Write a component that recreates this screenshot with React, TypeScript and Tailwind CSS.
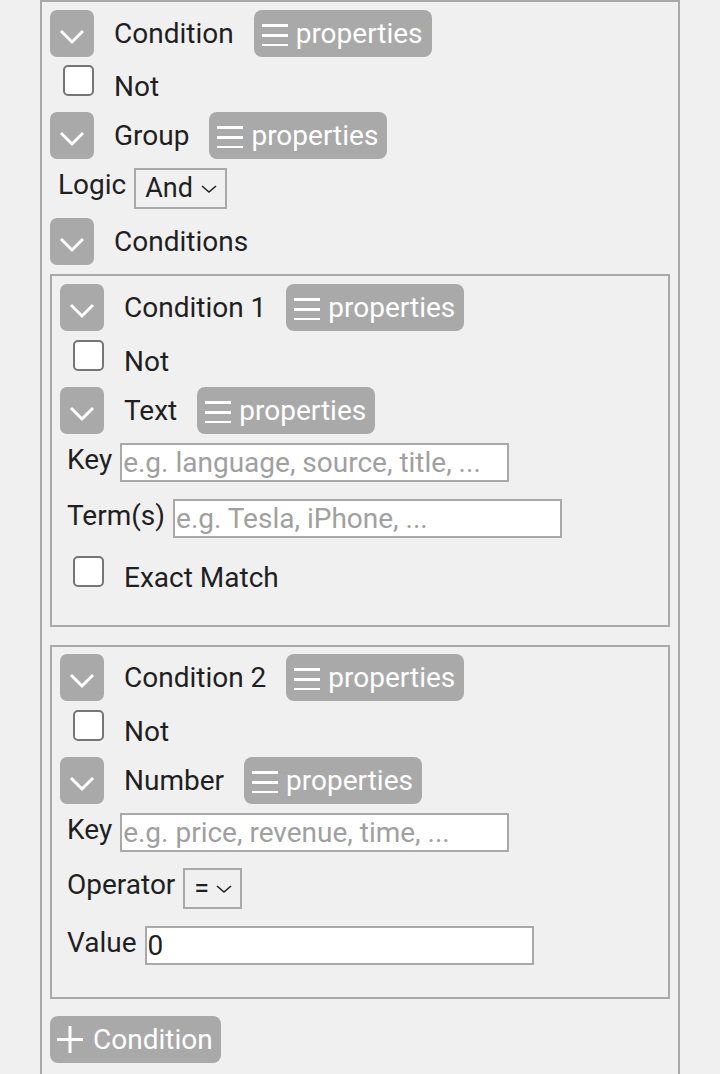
import React from "react";

function Toggle() {
  return (
    <div className="flex h-[47px] w-[44px] shrink-0 items-center justify-center rounded-[7px] bg-[#a9a9a9]">
      <svg width="44" height="47" viewBox="0 0 44 47">
        <polyline points="11,21 22,32 33,21" fill="none" stroke="white" strokeWidth="3" />
      </svg>
    </div>
  );
}

function PropsButton() {
  return (
    <button className="flex h-[47px] items-center gap-[8px] rounded-[8px] bg-[#a9a9a9] pl-[8px] pr-[9px] text-white">
      <svg width="26" height="24" viewBox="0 0 26 24">
        <rect x="0" y="2" width="26" height="3" fill="white" />
        <rect x="0" y="12" width="26" height="3" fill="white" />
        <rect x="0" y="22" width="26" height="3" fill="white" />
      </svg>
      <span className="leading-none">properties</span>
    </button>
  );
}

function HeaderRow({ label, props = true, className = "" }: { label: string; props?: boolean; className?: string }) {
  return (
    <div className={`flex h-[47px] items-center gap-[20px] ${className}`}>
      <Toggle />
      <span>{label}</span>
      {props && <PropsButton />}
    </div>
  );
}

function CheckRow({ label, className = "" }: { label: string; className?: string }) {
  return (
    <div className={`flex items-baseline gap-[20px] ${className}`}>
      <span className="ml-[13px] block h-[31px] w-[31px] shrink-0 rounded-[5px] border-2 border-[#767676] bg-white" />
      <span className="leading-[33px]">{label}</span>
    </div>
  );
}

function TextField({ label, placeholder, value, className = "" }: { label: string; placeholder?: string; value?: string; className?: string }) {
  return (
    <div className={`ml-[7px] flex items-start gap-2 ${className}`}>
      <span className="leading-[33px]">{label}</span>
      <input
        readOnly
        value={value}
        placeholder={placeholder}
        className="h-[39px] w-[389px] border-2 border-[#a9a9a9] bg-white px-[1px] text-[28px] text-[#1f1f1f] outline-none placeholder:text-[#a0a0a0]"
      />
    </div>
  );
}

function SelectField({ label, value, width, className = "" }: { label: string; value: string; width: string; className?: string }) {
  return (
    <div className={`flex items-start gap-2 ${className}`}>
      <span className="leading-[33px]">{label}</span>
      <div className={`${width} flex h-[41px] items-center justify-between border-2 border-[#a9a9a9] pl-[9px] pr-[7px] text-[27px]`}>
        <span>{value}</span>
        <svg width="18" height="10" viewBox="0 0 18 10">
          <polyline points="2,2 9,8 16,2" fill="none" stroke="#222" strokeWidth="1.6" />
        </svg>
      </div>
    </div>
  );
}

export default function App() {
  return (
    <div className="min-h-screen bg-[#f0f0f0] font-['Roboto',sans-serif] text-[28px] text-[#1f1f1f]">
      <div className="ml-[40px] w-[640px] border-2 border-b-0 border-[#a9a9a9] px-[8px] pt-[8px] pb-[20px]">
        <HeaderRow label="Condition" />
        <CheckRow label="Not" className="mt-[8px]" />
        <HeaderRow label="Group" className="mt-[9px]" />
        <SelectField label="Logic" value="And" width="w-[93px]" className="ml-[8px] mt-[9px]" />
        <HeaderRow label="Conditions" props={false} className="mt-[9px]" />

        {/* Condition 1 */}
        <div className="mt-[9px] border-2 border-[#a9a9a9] px-[8px] pt-[8px] pb-[31px]">
          <HeaderRow label="Condition 1" />
          <CheckRow label="Not" className="mt-[9px]" />
          <HeaderRow label="Text" className="mt-[9px]" />
          <TextField label="Key" placeholder="e.g. language, source, title, ..." className="mt-[9px]" />
          <TextField label="Term(s)" placeholder="e.g. Tesla, iPhone, ..." className="mt-[17px]" />
          <CheckRow label="Exact Match" className="mt-[18px]" />
        </div>

        {/* Condition 2 */}
        <div className="mt-[18px] border-2 border-[#a9a9a9] px-[8px] pt-[7px] pb-[32px]">
          <HeaderRow label="Condition 2" />
          <CheckRow label="Not" className="mt-[9px]" />
          <HeaderRow label="Number" className="mt-[9px]" />
          <TextField label="Key" placeholder="e.g. price, revenue, time, ..." className="mt-[9px]" />
          <SelectField label="Operator" value="=" width="w-[59px]" className="ml-[7px] mt-[16px]" />
          <TextField label="Value" value="0" className="mt-[17px]" />
        </div>

        <button className="mt-[17px] flex h-[47px] items-center gap-[10px] rounded-[8px] bg-[#a9a9a9] pl-[7px] pr-[8px] text-white">
          <svg width="26" height="27" viewBox="0 0 26 27">
            <rect x="0" y="12" width="26" height="3" fill="white" />
            <rect x="11.5" y="0" width="3" height="27" fill="white" />
          </svg>
          <span className="leading-none">Condition</span>
        </button>
      </div>
    </div>
  );
}
